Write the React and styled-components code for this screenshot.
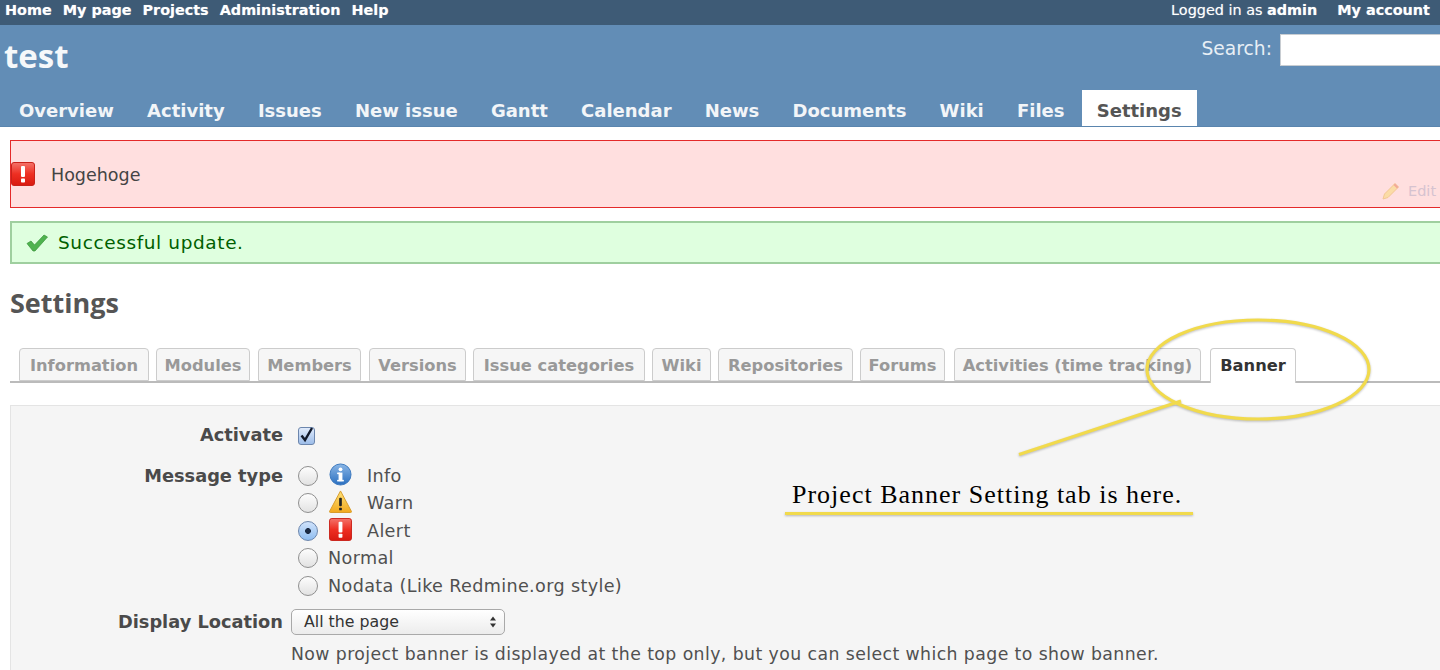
import React from "react";
import styled, { createGlobalStyle } from "styled-components";

const Global = createGlobalStyle`
  html, body { margin: 0; padding: 0; background: #fff; }
  body { font-family: "DejaVu Sans", Verdana, sans-serif; color: #484848; }
  #root { width: 1440px; height: 670px; overflow: hidden; }
`;

const Page = styled.div`
  position: relative;
  width: 1440px;
  height: 670px;
  overflow: hidden;
  background: #fff;
`;

const TopMenu = styled.div`
  height: 25px;
  background: #3e5b76;
  display: flex;
  align-items: center;
  justify-content: space-between;
  padding: 0 10px 6px 5px;
  box-sizing: border-box;
  font-size: 14.4px;
  font-weight: 700;
  color: #fff;
  text-shadow: 0 0 1px rgba(255, 255, 255, 0.45);
`;

const TopGroup = styled.div`
  display: flex;
  gap: ${(p) => p.$gap}px;
  white-space: nowrap;
`;

const Plain = styled.span`
  font-weight: 400;
`;

const Header = styled.div`
  height: 102px;
  background: #628db6;
  display: flex;
  flex-direction: column;
  border-bottom: 1px solid #5a85ae;
  box-sizing: border-box;
`;

const HeaderRow = styled.div`
  height: 66px;
  display: flex;
  justify-content: space-between;
  color: #fff;
`;

const Title = styled.h1`
  margin: 8px 0 0 4px;
  font-family: "Open Sans", sans-serif;
  font-size: 33px;
  line-height: 46px;
  font-weight: 700;
  color: #f6f8fa;
`;

const Search = styled.div`
  display: flex;
  align-items: flex-start;
  gap: 8px;
  font-size: 18.7px;
  padding-top: 9px;
  color: #e8eff5;
`;

const SearchLabel = styled.span`
  line-height: 30px;
`;

const SearchInput = styled.input`
  width: 170px;
  height: 32px;
  margin: 0 -10px 0 0;
  padding: 0;
  box-sizing: border-box;
  border: 1px solid #c8cdd2;
  background: #fff;
  flex: none;
`;

const MainTabs = styled.div`
  display: flex;
  gap: 1.2px;
  padding-left: 3px;
  height: 36px;
`;

const MainTab = styled.div`
  padding: 0 ${(p) => (p.$active ? 15 : 16)}px;
  height: 36px;
  line-height: 41px;
  font-size: 18px;
  font-weight: 700;
  white-space: nowrap;
  color: ${(p) => (p.$active ? "#555" : "#f2f5f8")};
  background: ${(p) => (p.$active ? "#fff" : "transparent")};
`;

const Content = styled.div`
  width: 1500px;
  padding: 13px 0 0 10px;
  box-sizing: border-box;
`;

const Banner = styled.div`
  height: 68px;
  box-sizing: border-box;
  border: 1px solid #e42a2a;
  background: #ffdfdf;
  display: flex;
  align-items: center;
  gap: 16px;
  font-size: 17.5px;
  color: #444;
  position: relative;
`;

const BannerText = styled.span`
  padding-top: 2px;
`;

const EditLink = styled.div`
  position: absolute;
  left: 1371px;
  top: 41px;
  display: flex;
  align-items: center;
  gap: 8px;
  font-size: 14.5px;
  color: #d6c3d0;
`;

const Success = styled.div`
  margin-top: 13px;
  height: 43px;
  box-sizing: border-box;
  border: 2px solid #9fcf9f;
  background: #dfffdf;
  display: flex;
  align-items: center;
  gap: 10px;
  padding-left: 14px;
  font-size: 18.5px;
  letter-spacing: 0.6px;
  color: #005f00;
`;

const Heading = styled.h2`
  margin: 20px 0 0;
  height: 44px;
  font-family: "Open Sans", sans-serif;
  font-size: 27px;
  line-height: 38px;
  font-weight: 700;
  color: #555;
`;

const SubTabs = styled.div`
  margin-top: 20px;
  height: 35px;
  box-sizing: border-box;
  border-bottom: 2px solid #bbb;
  padding-left: 9px;
  display: flex;
`;

const SubTab = styled.div`
  width: ${(p) => p.$w}px;
  margin-right: ${(p) => p.$mr}px;
  height: ${(p) => (p.$active ? 35 : 33)}px;
  box-sizing: border-box;
  border: 1px solid #ccc;
  border-bottom: ${(p) => (p.$active ? "none" : "1px solid #ccc")};
  border-radius: 4px 4px 0 0;
  background: ${(p) => (p.$active ? "#fff" : "#f6f6f6")};
  color: ${(p) => (p.$active ? "#333" : "#999")};
  font-size: 16.3px;
  font-weight: 700;
  line-height: 33px;
  text-align: center;
  white-space: nowrap;
`;

const Box = styled.div`
  margin-top: 22px;
  height: 300px;
  box-sizing: border-box;
  border: 1px solid #e4e4e4;
  background: #f5f5f5;
  padding-top: 15px;
  color: #505050;
`;

const FormRow = styled.div`
  display: grid;
  grid-template-columns: 272px 1fr;
  column-gap: 8px;
  margin-bottom: ${(p) => p.$mb || 0}px;
`;

const FieldLabel = styled.div`
  text-align: right;
  font-weight: 700;
  font-size: 17.8px;
  line-height: ${(p) => p.$lh}px;
  color: #4a4a4a;
  white-space: nowrap;
`;

const Checkbox = styled.div`
  margin: 6px 0 0 7px;
  width: 17px;
  height: 18px;
  box-sizing: border-box;
  border: 1px solid #6c86ad;
  border-radius: 3px;
  background: linear-gradient(#dfeafb, #9dbde9);
  position: relative;
`;

const RadioGroup = styled.div`
  margin-top: -1px;
`;

const RadioRow = styled.div`
  height: 27.5px;
  display: flex;
  align-items: center;
  padding-left: 7px;
`;

const Radio = styled.span`
  width: 20px;
  height: 20px;
  box-sizing: border-box;
  border-radius: 50%;
  flex: none;
  border: 1px solid ${(p) => (p.$on ? "#6c86ad" : "#8f8f8f")};
  background: ${(p) =>
    p.$on
      ? "radial-gradient(circle, #1c2b44 0 2.6px, transparent 3.2px), linear-gradient(#cfe2fb, #8fbdf0)"
      : "linear-gradient(#fdfdfd, #e2e2e2)"};
`;

const IconSlot = styled.span`
  width: 23px;
  height: 23px;
  margin: -3px 15px 0 11px;
  flex: none;
  display: block;
`;

const BannerIcon = styled.span`
  width: 24px;
  height: 24px;
  flex: none;
  display: block;
`;

const RadioText = styled.span`
  margin-left: ${(p) => p.$ml || 0}px;
  font-size: 17.6px;
  letter-spacing: 0.35px;
  white-space: nowrap;
`;

const SelectBox = styled.div`
  width: 214px;
  height: 26px;
  box-sizing: border-box;
  border: 1px solid #a9a9a9;
  border-radius: 5px;
  background: linear-gradient(#fff, #ececec);
  font-size: 15.8px;
  color: #333;
  line-height: 26px;
  padding: 0 6px 0 12px;
  display: flex;
  justify-content: space-between;
  align-items: center;
`;

const Hint = styled.div`
  margin-top: 7px;
  font-size: 17.3px;
  letter-spacing: 0.42px;
  line-height: 24px;
  color: #505050;
  white-space: nowrap;
`;

const Annotation = styled.svg`
  position: absolute;
  left: 0;
  top: 0;
  pointer-events: none;
  filter: drop-shadow(0 1px 1px rgba(0, 0, 0, 0.25));
`;

const Note = styled.div`
  position: absolute;
  left: 792px;
  top: 479px;
  font-family: "Liberation Serif", serif;
  font-size: 26px;
  line-height: 32px;
  letter-spacing: 1px;
  color: #000;
  white-space: nowrap;
`;

const AlertIcon = ({ id }) => (
  <svg viewBox="0 0 24 24" width="100%" height="100%">
    <defs>
      <linearGradient id={id} x1="0" y1="0" x2="0" y2="1">
        <stop offset="0" stopColor="#f4736a" />
        <stop offset="0.5" stopColor="#ee2f22" />
        <stop offset="1" stopColor="#d81a10" />
      </linearGradient>
    </defs>
    <rect x="0.5" y="0.5" width="23" height="23" rx="2.5" fill={`url(#${id})`} stroke="#c9221a" />
    <rect x="10" y="4" width="4" height="11" rx="1" fill="#fff" />
    <rect x="10" y="16.5" width="4" height="4" rx="0.8" fill="#fff" />
  </svg>
);

const InfoIcon = () => (
  <svg viewBox="0 0 24 24" width="100%" height="100%">
    <defs>
      <linearGradient id="infoFill" x1="0" y1="0" x2="0" y2="1">
        <stop offset="0" stopColor="#8ab6e6" />
        <stop offset="1" stopColor="#2a6fc0" />
      </linearGradient>
    </defs>
    <circle cx="12" cy="12" r="11" fill="url(#infoFill)" stroke="#3c78bd" />
    <rect x="10" y="10" width="4" height="9" fill="#fff" />
    <rect x="8.5" y="10" width="3" height="1.6" fill="#fff" />
    <rect x="8.5" y="17.6" width="7" height="1.6" fill="#fff" />
    <circle cx="12" cy="6.6" r="2" fill="#fff" />
  </svg>
);

const WarnIcon = () => (
  <svg viewBox="0 0 24 24" width="100%" height="100%">
    <defs>
      <linearGradient id="warnFill" x1="0" y1="0" x2="0" y2="1">
        <stop offset="0" stopColor="#fde27a" />
        <stop offset="1" stopColor="#f2a91e" />
      </linearGradient>
    </defs>
    <path d="M12 1 L23.5 22.5 Q23.5 23.5 22.5 23.5 L1.5 23.5 Q0.5 23.5 0.5 22.5 Z" fill="url(#warnFill)" stroke="#d79a26" />
    <rect x="10.6" y="8" width="2.8" height="9" rx="1" fill="#222" />
    <rect x="10.6" y="18.4" width="2.8" height="2.8" rx="0.6" fill="#222" />
  </svg>
);

const CheckIcon = () => (
  <svg viewBox="0 0 22 18" width="22" height="18">
    <path d="M1 9.5 L5 7 L8.5 11 L18 1 L21.5 3 L9 17 L7 17 Z" fill="#4fb34f" stroke="#3a933a" strokeWidth="0.7" strokeLinejoin="round" />
  </svg>
);

const PencilIcon = () => (
  <svg viewBox="0 0 18 18" width="18" height="18">
    <path d="M1 17 L2.5 12 L13 1.5 L16.5 5 L6 15.5 Z" fill="#fbdca6" stroke="#f3c794" strokeWidth="1" />
    <path d="M13 1.5 L16.5 5 L15 6.5 L11.5 3 Z" fill="#f3a998" />
  </svg>
);

const mainTabs = ["Overview", "Activity", "Issues", "New issue", "Gantt", "Calendar", "News", "Documents", "Wiki", "Files"];

const subTabs = [
  ["Information", 130, 7],
  ["Modules", 94, 8],
  ["Members", 103, 8],
  ["Versions", 97, 7],
  ["Issue categories", 172, 7],
  ["Wiki", 59, 7],
  ["Repositories", 135, 7],
  ["Forums", 85, 9],
  ["Activities (time tracking)", 247, 9],
];

export default function App() {
  return (
    <Page>
      <Global />
      <TopMenu>
        <TopGroup $gap={11}>
          <span>Home</span>
          <span>My page</span>
          <span>Projects</span>
          <span>Administration</span>
          <span>Help</span>
        </TopGroup>
        <TopGroup $gap={20}>
          <span>
            <Plain>Logged in as </Plain>admin
          </span>
          <span>My account</span>
        </TopGroup>
      </TopMenu>
      <Header>
        <HeaderRow>
          <Title>test</Title>
          <Search>
            <SearchLabel>Search:</SearchLabel>
            <SearchInput aria-label="Search" />
          </Search>
        </HeaderRow>
        <MainTabs>
          {mainTabs.map((t) => (
            <MainTab key={t}>{t}</MainTab>
          ))}
          <MainTab $active>Settings</MainTab>
        </MainTabs>
      </Header>
      <Content>
        <Banner>
          <BannerIcon>
            <AlertIcon id="alertBanner" />
          </BannerIcon>
          <BannerText>Hogehoge</BannerText>
          <EditLink>
            <PencilIcon />
            Edit
          </EditLink>
        </Banner>
        <Success>
          <CheckIcon />
          Successful update.
        </Success>
        <Heading>Settings</Heading>
        <SubTabs>
          {subTabs.map(([t, w, mr]) => (
            <SubTab key={t} $w={w} $mr={mr}>
              {t}
            </SubTab>
          ))}
          <SubTab $active $w={86} $mr={0}>
            Banner
          </SubTab>
        </SubTabs>
        <Box>
          <FormRow $mb={14}>
            <FieldLabel $lh={28}>Activate</FieldLabel>
            <Checkbox>
              <svg viewBox="0 0 17 18" width="17" height="18" style={{ position: "absolute", left: -1, top: -2 }}>
                <path d="M3.5 9.5 L7 14 L14 2" fill="none" stroke="#10192b" strokeWidth="2.4" />
              </svg>
            </Checkbox>
          </FormRow>
          <FormRow $mb={9}>
            <FieldLabel $lh={25}>Message type</FieldLabel>
            <RadioGroup>
              <RadioRow>
                <Radio />
                <IconSlot>
                  <InfoIcon />
                </IconSlot>
                <RadioText>Info</RadioText>
              </RadioRow>
              <RadioRow>
                <Radio />
                <IconSlot>
                  <WarnIcon />
                </IconSlot>
                <RadioText>Warn</RadioText>
              </RadioRow>
              <RadioRow>
                <Radio $on />
                <IconSlot>
                  <AlertIcon id="alertRadio" />
                </IconSlot>
                <RadioText>Alert</RadioText>
              </RadioRow>
              <RadioRow>
                <Radio />
                <RadioText $ml={10}>Normal</RadioText>
              </RadioRow>
              <RadioRow>
                <Radio />
                <RadioText $ml={10}>Nodata (Like Redmine.org style)</RadioText>
              </RadioRow>
            </RadioGroup>
          </FormRow>
          <FormRow>
            <FieldLabel $lh={26}>Display Location</FieldLabel>
            <div>
              <SelectBox>
                All the page
                <svg viewBox="0 0 10 14" width="10" height="14">
                  <path d="M5 1.5 L8 5.5 L2 5.5 Z M5 12.5 L8 8.5 L2 8.5 Z" fill="#333" />
                </svg>
              </SelectBox>
              <Hint>Now project banner is displayed at the top only, but you can select which page to show banner.</Hint>
            </div>
          </FormRow>
        </Box>
      </Content>
      <Annotation width="1440" height="670" viewBox="0 0 1440 670">
        <g fill="none" stroke="#f1da4c" strokeWidth="3.2">
          <ellipse cx="1258" cy="369.5" rx="111" ry="49.5" />
          <path d="M1181 401 L1019 454.5" />
          <path d="M785 513.5 L1193 513.5" />
        </g>
      </Annotation>
      <Note>Project Banner Setting tab is here.</Note>
    </Page>
  );
}
